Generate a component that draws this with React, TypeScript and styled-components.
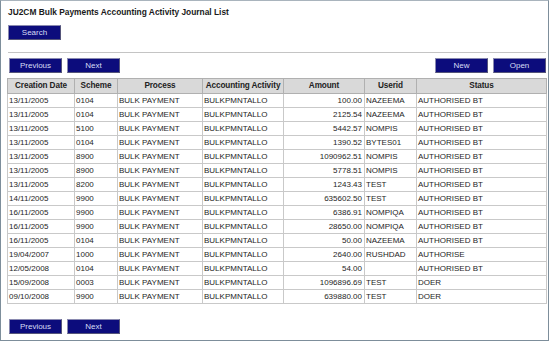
import React from 'react';
import styled, { createGlobalStyle } from 'styled-components';

const GlobalStyle = createGlobalStyle`
  html, body {
    margin: 0;
    padding: 0;
    background: #ffffff;
    font-family: "Liberation Sans", Arial, sans-serif;
  }
`;

const Frame = styled.div`
  box-sizing: border-box;
  width: 549px;
  height: 341px;
  border: 1px solid #7d8e9b;
  border-top-color: #a9b4bd;
  padding: 4px 0 0 6px;
  display: flex;
  flex-direction: column;
`;

const Title = styled.div`
  font-size: 8.4px;
  font-weight: bold;
  color: #1a1a1a;
  height: 14px;
  line-height: 14px;
  padding-left: 1px;
`;

const Button = styled.button`
  box-sizing: border-box;
  width: 53px;
  height: 15px;
  padding: 0;
  background: #0c0c7c;
  border: 1px solid #8a8ab0;
  border-right-color: #55557a;
  border-bottom-color: #55557a;
  color: #d6dcf5;
  font-family: "Liberation Sans", Arial, sans-serif;
  font-size: 8px;
  line-height: 13px;
  cursor: pointer;
`;

const SearchRow = styled.div`
  margin-top: 2px;
  padding-left: 1px;
  height: 15px;
`;

const Rule = styled.div`
  margin: 16px 2px 0 1px;
  width: 538px;
  border-top: 1px solid #c4c4c4;
`;

const Toolbar = styled.div<{ $top: number }>`
  display: flex;
  justify-content: space-between;
  width: 537px;
  height: 15px;
  margin-top: ${p => p.$top}px;
  padding-left: 2px;
`;

const Group = styled.div`
  display: flex;
  gap: 5px;
`;

const Table = styled.table`
  margin-top: 5px;
  width: 539px;
  border-collapse: collapse;
  table-layout: fixed;
  border: 1px solid #9a9a9a;
  font-size: 8px;
  color: #1e1e1e;
`;

const HeadRow = styled.tr`
  height: 15px;
`;

const Row = styled.tr`
  height: 14px;
`;

const Th = styled.th`
  padding: 0;
  background: #d9d9d9;
  border: 1px solid #b0b0b0;
  font-weight: bold;
  text-align: center;
  font-size: 8.2px;
  letter-spacing: -0.1px;
  line-height: 12px;
  white-space: nowrap;
  overflow: hidden;
  color: #222;
`;

const Td = styled.td<{ $right?: boolean }>`
  padding: 0 2px 0 1px;
  border: 1px solid #c9c9c9;
  line-height: 11px;
  text-align: ${p => (p.$right ? 'right' : 'left')};
  white-space: nowrap;
  overflow: hidden;
`;

const columns = [
  { label: 'Creation Date', width: 67 },
  { label: 'Scheme', width: 43 },
  { label: 'Process', width: 85 },
  { label: 'Accounting Activity', width: 81 },
  { label: 'Amount', width: 81 },
  { label: 'Userid', width: 52 },
  { label: 'Status', width: 130 },
];

const rows: string[][] = [
  ['13/11/2005', '0104', 'BULK PAYMENT', 'BULKPMNTALLO', '100.00', 'NAZEEMA', 'AUTHORISED BT'],
  ['13/11/2005', '0104', 'BULK PAYMENT', 'BULKPMNTALLO', '2125.54', 'NAZEEMA', 'AUTHORISED BT'],
  ['13/11/2005', '5100', 'BULK PAYMENT', 'BULKPMNTALLO', '5442.57', 'NOMPIS', 'AUTHORISED BT'],
  ['13/11/2005', '0104', 'BULK PAYMENT', 'BULKPMNTALLO', '1390.52', 'BYTES01', 'AUTHORISED BT'],
  ['13/11/2005', '8900', 'BULK PAYMENT', 'BULKPMNTALLO', '1090962.51', 'NOMPIS', 'AUTHORISED BT'],
  ['13/11/2005', '8900', 'BULK PAYMENT', 'BULKPMNTALLO', '5778.51', 'NOMPIS', 'AUTHORISED BT'],
  ['13/11/2005', '8200', 'BULK PAYMENT', 'BULKPMNTALLO', '1243.43', 'TEST', 'AUTHORISED BT'],
  ['14/11/2005', '9900', 'BULK PAYMENT', 'BULKPMNTALLO', '635602.50', 'TEST', 'AUTHORISED BT'],
  ['16/11/2005', '9900', 'BULK PAYMENT', 'BULKPMNTALLO', '6386.91', 'NOMPIQA', 'AUTHORISED BT'],
  ['16/11/2005', '9900', 'BULK PAYMENT', 'BULKPMNTALLO', '28650.00', 'NOMPIQA', 'AUTHORISED BT'],
  ['16/11/2005', '0104', 'BULK PAYMENT', 'BULKPMNTALLO', '50.00', 'NAZEEMA', 'AUTHORISED BT'],
  ['19/04/2007', '1000', 'BULK PAYMENT', 'BULKPMNTALLO', '2640.00', 'RUSHDAD', 'AUTHORISE'],
  ['12/05/2008', '0104', 'BULK PAYMENT', 'BULKPMNTALLO', '54.00', '', 'AUTHORISED BT'],
  ['15/09/2008', '0003', 'BULK PAYMENT', 'BULKPMNTALLO', '1096896.69', 'TEST', 'DOER'],
  ['09/10/2008', '9900', 'BULK PAYMENT', 'BULKPMNTALLO', '639880.00', 'TEST', 'DOER'],
];

const App: React.FC = () => {
  return (
    <>
      <GlobalStyle />
      <Frame>
        <Title>JU2CM Bulk Payments Accounting Activity Journal List</Title>
        <SearchRow>
          <Button>Search</Button>
        </SearchRow>
        <Rule />
        <Toolbar $top={5}>
          <Group>
            <Button>Previous</Button>
            <Button>Next</Button>
          </Group>
          <Group>
            <Button>New</Button>
            <Button>Open</Button>
          </Group>
        </Toolbar>
        <Table>
          <colgroup>
            {columns.map(c => (
              <col key={c.label} style={{ width: c.width }} />
            ))}
          </colgroup>
          <thead>
            <HeadRow>
              {columns.map(c => (
                <Th key={c.label}>{c.label}</Th>
              ))}
            </HeadRow>
          </thead>
          <tbody>
            {rows.map((r, i) => (
              <Row key={i}>
                {r.map((v, j) => (
                  <Td key={j} $right={j === 4}>{v}</Td>
                ))}
              </Row>
            ))}
          </tbody>
        </Table>
        <Toolbar $top={15}>
          <Group>
            <Button>Previous</Button>
            <Button>Next</Button>
          </Group>
        </Toolbar>
      </Frame>
    </>
  );
};

export default App;
